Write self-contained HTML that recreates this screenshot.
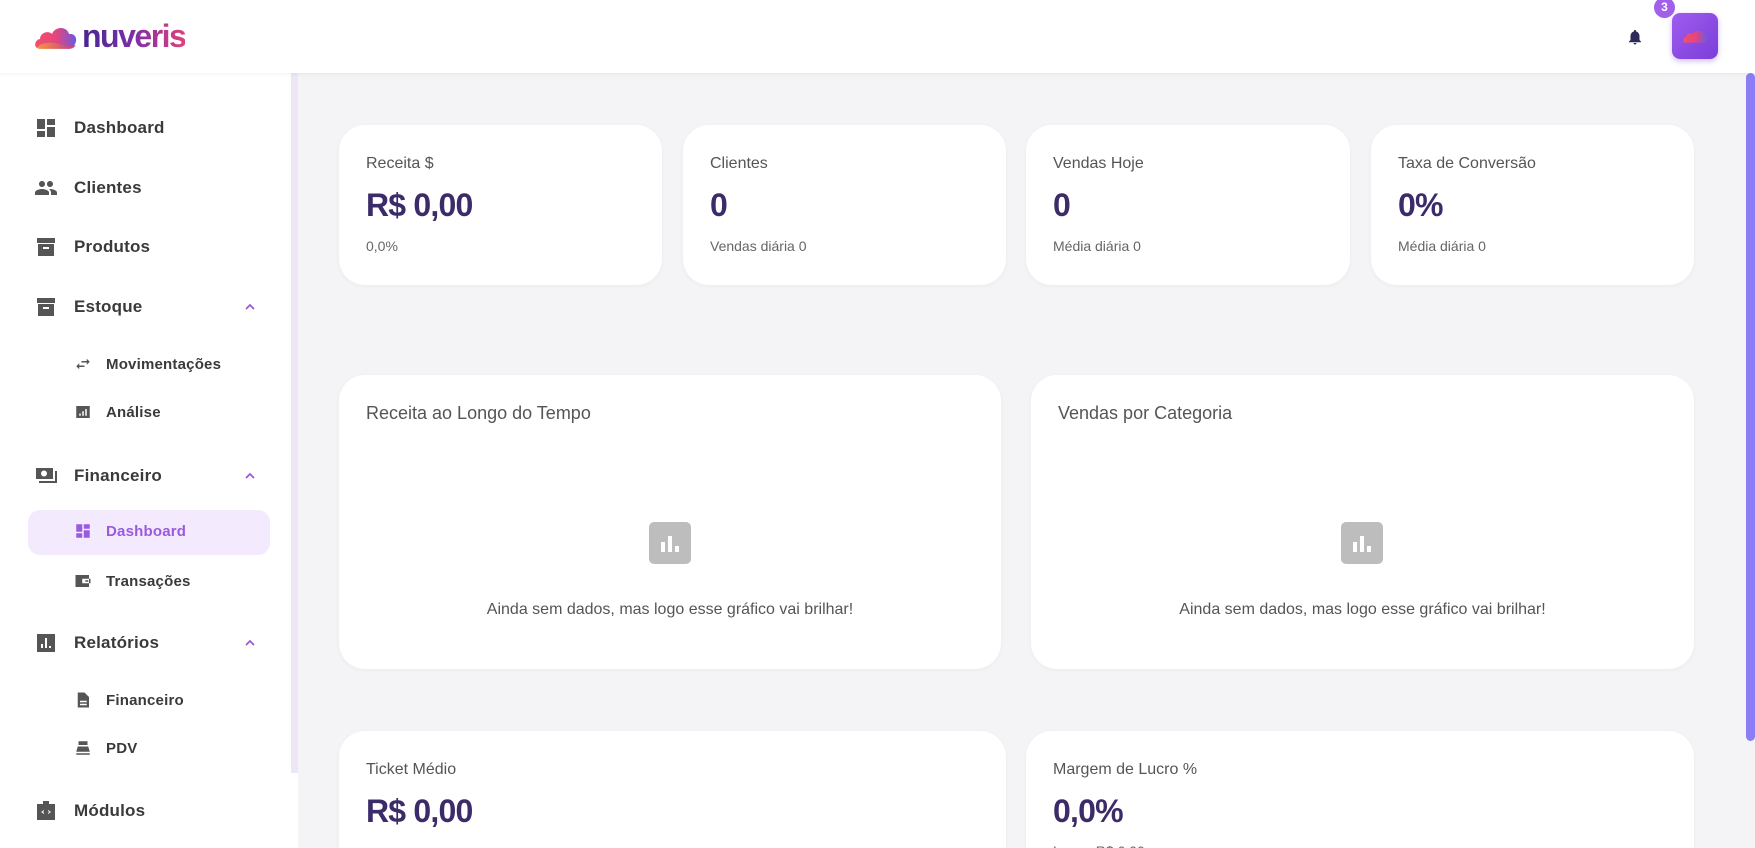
<!DOCTYPE html>
<html style="width:1755px;height:848px;overflow:hidden"><head><meta charset="utf-8"><style>
*{box-sizing:border-box;margin:0;padding:0}
body{width:1755px;height:848px;overflow:hidden;background:#f4f3f6;font-family:"Liberation Sans",Arial,sans-serif;position:relative}
.header{position:absolute;left:0;top:0;width:1755px;height:73px;background:#fff;box-shadow:0 1px 4px rgba(0,0,0,.06);z-index:3}
.logo{position:absolute;left:34px;top:20px;display:flex;align-items:center}
.logo span{font-size:32px;font-weight:bold;letter-spacing:-1.5px;background:linear-gradient(90deg,#4a2590,#7b2fa8 50%,#e0407a);-webkit-background-clip:text;color:transparent;margin-left:4px;line-height:33px}
.side{position:absolute;left:0;top:73px;width:298px;height:775px;background:#fff}
.side .bar{position:absolute;right:0;top:0;width:7px;height:700px;background:#ece6f7}
.it{position:absolute;left:34px;display:flex;align-items:center;font-size:17px;color:#3a3a3a;font-weight:bold;letter-spacing:.2px}
.it svg{width:24px;height:24px;fill:#555;margin-right:16px}
.sub{left:74px;font-size:15px}
.sub svg{width:18px;height:18px;margin-right:14px}
.chev{position:absolute;left:243px;width:14px;height:14px}
.active{position:absolute;left:28px;top:510px;width:242px;height:45px;background:#f3eafd;border-radius:12px}
.card{position:absolute;background:#fff;border-radius:26px;box-shadow:0 1px 4px rgba(0,0,0,.04);overflow:hidden}
.bot{border-radius:26px 26px 0 0}
.lbl{position:absolute;left:27px;font-size:16px;color:#555}
.num{position:absolute;left:27px;font-size:32px;font-weight:bold;color:#3b2c69;letter-spacing:-.8px}
.sm{position:absolute;left:27px;font-size:14px;color:#666}
.ct{position:absolute;left:27px;top:28px;font-size:18px;color:#555}
.ei{position:absolute;width:42px;height:42px;background:#bdbdbd;border-radius:5px}
.et{position:absolute;width:100%;text-align:center;font-size:16px;color:#555}
</style></head><body>
<div class="header">
 <div class="logo">
  <svg width="44" height="30" viewBox="0 0 44 30"><defs><linearGradient id="g" x1="0" x2="1"><stop offset="0" stop-color="#f0506e"/><stop offset=".5" stop-color="#e8457a"/><stop offset="1" stop-color="#6a5ae0"/></linearGradient><linearGradient id="g2" x1="0" x2="1"><stop offset="0" stop-color="#f79a3e"/><stop offset="1" stop-color="#c13a8a"/></linearGradient></defs>
  <path d="M4 26c-4 0-4-8 2-9 0-6 8-9 12-5 3-8 15-8 17 0 6-1 9 5 6 10-1 2-2 4-5 4z" fill="url(#g)"/><path d="M3 26c2-5 14-7 22-4 6 2 12 3 17 1-2 3-4 4-8 4H5z" fill="url(#g2)" opacity=".9"/></svg>
  <span>nuveris</span>
 </div>
 <svg style="position:absolute;left:1626px;top:27px" width="18" height="20" viewBox="0 0 24 24"><path fill="#2e2a5a" d="M12 22c1.1 0 2-.9 2-2h-4c0 1.1.9 2 2 2zm6-6v-5c0-3.1-1.6-5.6-4.5-6.3V4c0-.8-.7-1.5-1.5-1.5s-1.5.7-1.5 1.5v.7C7.6 5.4 6 7.9 6 11v5l-2 2v1h16v-1l-2-2z"/></svg>
 <div style="position:absolute;left:1672px;top:13px;width:46px;height:46px;border-radius:8px;background:linear-gradient(135deg,#a05cf0,#7a3ed8);box-shadow:0 2px 6px rgba(140,80,230,.4)">
  <svg style="position:absolute;left:10px;top:14px" width="27" height="18" viewBox="0 0 44 30"><path d="M4 26c-4 0-4-8 2-9 0-6 8-9 12-5 3-8 15-8 17 0 6-1 9 5 6 10-1 2-2 4-5 4z" fill="url(#g)"/></svg>
 </div>
 <div style="position:absolute;left:1654px;top:-3px;width:21px;height:21px;border-radius:50%;background:#a260ea;color:#fff;font-size:12px;font-weight:bold;text-align:center;line-height:21px">3</div>
</div>

<div class="side">
 <div class="bar"></div>
</div>
<div class="active"></div>
<div class="it" style="top:116px"><svg viewBox="0 0 24 24"><path d="M3 13h8V3H3zm0 8h8v-6H3zm10 0h8V11h-8zm0-18v6h8V3z"/></svg>Dashboard</div>
<div class="it" style="top:176px"><svg viewBox="0 0 24 24"><path d="M16 11c1.7 0 3-1.3 3-3s-1.3-3-3-3-3 1.3-3 3 1.3 3 3 3zm-8 0c1.7 0 3-1.3 3-3S9.7 5 8 5 5 6.3 5 8s1.3 3 3 3zm0 2c-2.3 0-7 1.2-7 3.5V19h14v-2.5C15 14.2 10.3 13 8 13zm8 0c-.3 0-.6 0-1 .1 1.2.8 2 2 2 3.4V19h6v-2.5c0-2.3-4.7-3.5-7-3.5z"/></svg>Clientes</div>
<div class="it" style="top:235px"><svg viewBox="0 0 24 24"><path d="M3 3h18v5H3zm1 6h16v12H4zm5 3v2h6v-2z"/></svg>Produtos</div>
<div class="it" style="top:295px"><svg viewBox="0 0 24 24"><path d="M3 3h18v5H3zm1 6h16v12H4zm5 3v2h6v-2z"/></svg>Estoque</div>
<div class="it sub" style="top:355px"><svg viewBox="0 0 24 24"><path d="M6.99 11L3 15l3.99 4v-3H14v-2H6.99zM21 9l-3.99-4v3H10v2h7.01v3z"/></svg>Movimentações</div>
<div class="it sub" style="top:403px"><svg viewBox="0 0 24 24"><path d="M3 4h18v16H3zm4 10v3h2v-3zm4-3v6h2v-6zm4-3v9h2V8z"/></svg>Análise</div>
<div class="it" style="top:464px"><svg viewBox="0 0 24 24"><path d="M2 4h17v11H2zm8 2.5a3 3 0 100 6 3 3 0 000-6zM21 7h2v12H5v-2h16z"/></svg>Financeiro</div>
<div class="it sub" style="top:522px;color:#9a5ae0"><svg viewBox="0 0 24 24" style="fill:#9a5ae0"><path d="M3 13h8V3H3zm0 8h8v-6H3zm10 0h8V11h-8zm0-18v6h8V3z"/></svg>Dashboard</div>
<div class="it sub" style="top:572px"><svg viewBox="0 0 24 24"><path d="M2 4h18v16H2zm9 5v6h11V9zm4 2h4v2h-4z"/></svg>Transações</div>
<div class="it" style="top:631px"><svg viewBox="0 0 24 24"><path d="M3 3h18v18H3zm4 10v4h2v-4zm4-6v10h2V7zm4 8v2h2v-2z"/></svg>Relatórios</div>
<div class="it sub" style="top:691px"><svg viewBox="0 0 24 24"><path d="M5 2h9l6 6v14H5zm3 11v2h9v-2zm0 4v2h9v-2z"/></svg>Financeiro</div>
<div class="it sub" style="top:739px"><svg viewBox="0 0 24 24"><path d="M6 3h12v5H6zm-1 7h14l2 7H3zm-2 9h18v2H3z"/></svg>PDV</div>
<div class="it" style="top:799px"><svg viewBox="0 0 24 24"><path d="M9 2h6v3h6v16H3V5h6zm1 9l-3 2 3 2v-1.5L8.5 13 10 12zm4 0v1l1.5 1-1.5 1v1l3-2z"/></svg>Módulos</div>
<svg class="chev" style="top:300px" viewBox="0 0 14 14"><path d="M3 9l4-4 4 4" stroke="#9a5ae0" stroke-width="1.8" fill="none"/></svg>
<svg class="chev" style="top:469px" viewBox="0 0 14 14"><path d="M3 9l4-4 4 4" stroke="#9a5ae0" stroke-width="1.8" fill="none"/></svg>
<svg class="chev" style="top:636px" viewBox="0 0 14 14"><path d="M3 9l4-4 4 4" stroke="#9a5ae0" stroke-width="1.8" fill="none"/></svg>

<div style="position:absolute;left:1746px;top:73px;width:9px;height:668px;background:#8b7df5;border-radius:5px"></div>

<div class="card" style="left:339px;top:125px;width:323px;height:160px"><div class="lbl" style="top:30px">Receita $</div><div class="num" style="top:62px">R$ 0,00</div><div class="sm" style="top:113px">0,0%</div></div>
<div class="card" style="left:683px;top:125px;width:323px;height:160px"><div class="lbl" style="top:30px">Clientes</div><div class="num" style="top:62px">0</div><div class="sm" style="top:113px">Vendas diária 0</div></div>
<div class="card" style="left:1026px;top:125px;width:324px;height:160px"><div class="lbl" style="top:30px">Vendas Hoje</div><div class="num" style="top:62px">0</div><div class="sm" style="top:113px">Média diária 0</div></div>
<div class="card" style="left:1371px;top:125px;width:323px;height:160px"><div class="lbl" style="top:30px">Taxa de Conversão</div><div class="num" style="top:62px">0%</div><div class="sm" style="top:113px">Média diária 0</div></div>

<div class="card" style="left:339px;top:375px;width:662px;height:294px"><div class="ct">Receita ao Longo do Tempo</div>
 <div class="ei" style="left:310px;top:147px"><svg width="42" height="42" viewBox="0 0 42 42"><path fill="#fff" d="M12 20h4v10h-4zm7-6h4v16h-4zm7 10h4v6h-4z"/></svg></div>
 <div class="et" style="top:226px">Ainda sem dados, mas logo esse gráfico vai brilhar!</div></div>
<div class="card" style="left:1031px;top:375px;width:663px;height:294px"><div class="ct">Vendas por Categoria</div>
 <div class="ei" style="left:310px;top:147px"><svg width="42" height="42" viewBox="0 0 42 42"><path fill="#fff" d="M12 20h4v10h-4zm7-6h4v16h-4zm7 10h4v6h-4z"/></svg></div>
 <div class="et" style="top:226px">Ainda sem dados, mas logo esse gráfico vai brilhar!</div></div>

<div class="card bot" style="left:339px;top:731px;width:667px;height:117px"><div class="lbl" style="top:30px">Ticket Médio</div><div class="num" style="top:62px">R$ 0,00</div></div>
<div class="card bot" style="left:1026px;top:731px;width:668px;height:117px"><div class="lbl" style="top:30px">Margem de Lucro %</div><div class="num" style="top:62px">0,0%</div><div class="sm" style="top:112px">Lucro: R$ 0,00</div></div>
</body></html>
